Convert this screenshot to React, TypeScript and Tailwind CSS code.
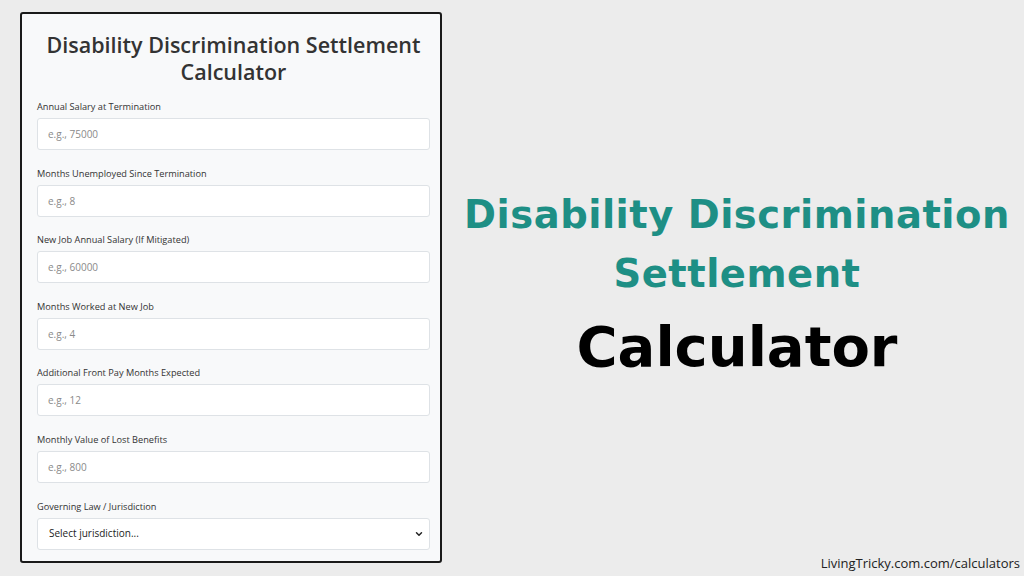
import { ChevronDown } from "lucide-react";

const fields = [
  { label: "Annual Salary at Termination", placeholder: "e.g., 75000" },
  { label: "Months Unemployed Since Termination", placeholder: "e.g., 8" },
  { label: "New Job Annual Salary (If Mitigated)", placeholder: "e.g., 60000" },
  { label: "Months Worked at New Job", placeholder: "e.g., 4" },
  { label: "Additional Front Pay Months Expected", placeholder: "e.g., 12" },
  { label: "Monthly Value of Lost Benefits", placeholder: "e.g., 800" },
];

function Field({ label, placeholder }: { label: string; placeholder: string }) {
  return (
    <div className="mb-[16.6px]">
      <label className="block text-[9.2px] leading-[14px] mb-[4px] text-[#333]">{label}</label>
      <input
        type="text"
        placeholder={placeholder}
        className="block w-full h-[32px] rounded-[3px] border border-[#dee2e6] bg-white px-[10px] text-[10px] text-[#333] placeholder:text-[#8a8a8a] outline-none"
      />
    </div>
  );
}

export default function App() {
  return (
    <div
      className="w-[1024px] h-[576px] bg-[#ececec] flex overflow-hidden"
      style={{ fontFamily: '"Open Sans", "Noto Sans", sans-serif' }}
    >
      <div className="ml-[20px] mt-[12px] w-[422px] h-[551px] border-2 border-[#1a1a1a] rounded-[3px] bg-[#f8f9fa] pl-[15px] pr-[10px] pt-[17px]">
        <h1 className="text-center text-[21.5px] leading-[27px] font-semibold text-[#333] mb-[15px]">
          Disability Discrimination Settlement
          <br />
          Calculator
        </h1>
        {fields.map((f) => (
          <Field key={f.label} label={f.label} placeholder={f.placeholder} />
        ))}
        <div>
          <label className="block text-[9.2px] leading-[14px] mb-[4px] text-[#333]">Governing Law / Jurisdiction</label>
          <div className="relative">
            <select className="block w-full h-[32px] appearance-none rounded-[3px] border border-[#dee2e6] bg-white px-[11px] text-[10px] text-[#222] outline-none">
              <option>Select jurisdiction...</option>
            </select>
            <ChevronDown className="absolute right-[6px] top-[11px] w-[10px] h-[10px] text-[#222]" strokeWidth={3.5} />
          </div>
        </div>
      </div>
      <div className="flex-1 flex flex-col items-center pt-[185px] pl-[8px] relative">
        <div
          className="text-center text-[#1e8f85] font-bold text-[38.5px] leading-[59px] tracking-[0.5px]"
          style={{ fontFamily: '"DejaVu Sans", sans-serif' }}
        >
          Disability Discrimination
          <br />
          Settlement
        </div>
        <div
          className="text-center text-black font-bold text-[56px] leading-[70px] mt-[9px]"
          style={{ fontFamily: '"DejaVu Sans", sans-serif' }}
        >
          Calculator
        </div>
        <div className="absolute right-[4px] bottom-[3px] text-[13px] text-[#222]">LivingTricky.com.com/calculators</div>
      </div>
    </div>
  );
}
